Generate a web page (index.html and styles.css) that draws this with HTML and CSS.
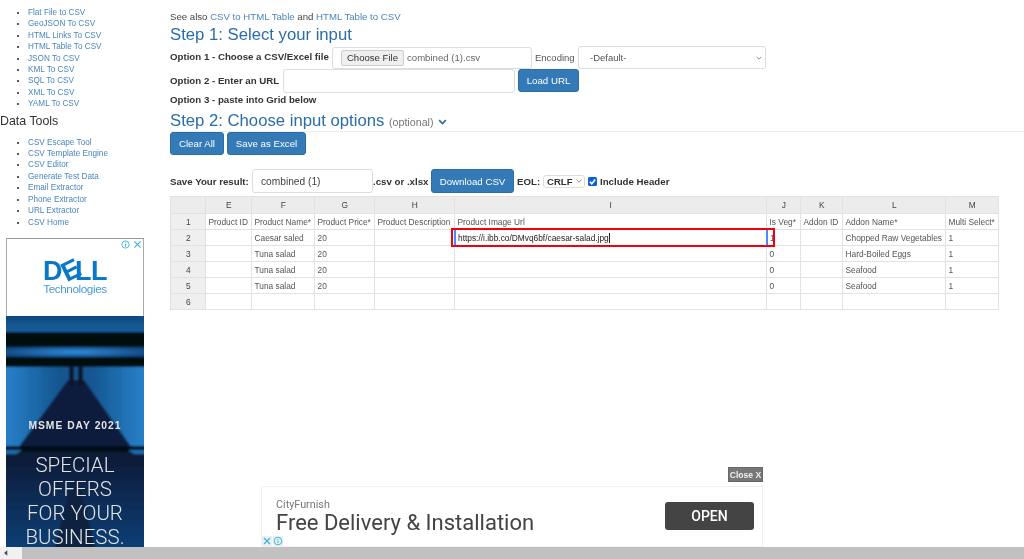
FILE: index.html
```html
<!DOCTYPE html>
<html lang="en">
<head>
<meta charset="utf-8">
<title>CSV Tools</title>
<link rel="stylesheet" href="styles.css">
</head>
<body>
<div class="page">
  <aside class="sidebar">
    <ul class="nav-list first">
      <li><a href="#">Flat File to CSV</a></li>
      <li><a href="#">GeoJSON To CSV</a></li>
      <li><a href="#">HTML Links To CSV</a></li>
      <li><a href="#">HTML Table To CSV</a></li>
      <li><a href="#">JSON To CSV</a></li>
      <li><a href="#">KML To CSV</a></li>
      <li><a href="#">SQL To CSV</a></li>
      <li><a href="#">XML To CSV</a></li>
      <li><a href="#">YAML To CSV</a></li>
    </ul>
    <h4 class="side-title">Data Tools</h4>
    <ul class="nav-list">
      <li><a href="#">CSV Escape Tool</a></li>
      <li><a href="#">CSV Template Engine</a></li>
      <li><a href="#">CSV Editor</a></li>
      <li><a href="#">Generate Test Data</a></li>
      <li><a href="#">Email Extractor</a></li>
      <li><a href="#">Phone Extractor</a></li>
      <li><a href="#">URL Extractor</a></li>
      <li><a href="#">CSV Home</a></li>
    </ul>
    <div class="side-ad">
      <div class="ad-top">
        <div class="ad-badges">
          <svg class="ad-icon" viewBox="0 0 10 10"><circle cx="5" cy="5" r="4" fill="none" stroke="#3fb6d8" stroke-width="1"/><path d="M5 2.600v.9M5 4.400v3" stroke="#3fb6d8" stroke-width="1.200"/></svg>
          <svg class="ad-icon" viewBox="0 0 10 10"><path d="M1.500 1.500l7 7M8.500 1.500l-7 7" stroke="#3fb6d8" stroke-width="1.300"/></svg>
        </div>
        <svg class="dell" viewBox="0 0 64 21">
          <text class="dell-letter" x="0" y="20">D</text>
          <text class="dell-letter" x="19" y="20" transform="rotate(-26 26 11)">E</text>
          <text class="dell-letter" x="32" y="20">L</text>
          <text class="dell-letter" x="48" y="20">L</text>
        </svg>
        <div class="dell-sub">Technologies</div>
      </div>
      <div class="ad-art">
        <svg class="ad-bg" viewBox="0 0 138 231" preserveAspectRatio="none">
          <defs>
            <filter id="soft" x="-5%" y="-5%" width="110%" height="110%"><feGaussianBlur stdDeviation="1"/></filter>
            <radialGradient id="band" cx="0.5" cy="0.5" r="0.6">
              <stop offset="0" stop-color="#2f8fe0"/>
              <stop offset="1" stop-color="#0f3f72"/>
            </radialGradient>
            <linearGradient id="wall" x1="0" y1="0" x2="1" y2="0">
              <stop offset="0" stop-color="#2a83cc"/>
              <stop offset="0.4" stop-color="#12558f"/>
              <stop offset="0.6" stop-color="#12558f"/>
              <stop offset="1" stop-color="#2a83cc"/>
            </linearGradient>
            <linearGradient id="top" x1="0" y1="0" x2="0" y2="1">
              <stop offset="0" stop-color="#0d4478"/>
              <stop offset="1" stop-color="#175f9e"/>
            </linearGradient>
            <linearGradient id="floor" x1="0" y1="0" x2="0" y2="1">
              <stop offset="0" stop-color="#071a34"/>
              <stop offset="1" stop-color="#123f78"/>
            </linearGradient>
          </defs>
          <rect width="138" height="231" fill="#0a2444"/>
          <g filter="url(#soft)">
            <rect x="-4" y="-4" width="146" height="21" fill="url(#top)"/>
            <rect x="-4" y="16" width="146" height="15" fill="#03080f"/>
            <rect x="-4" y="31" width="146" height="10" fill="url(#band)"/>
            <rect x="-4" y="41" width="146" height="10" fill="#03070d"/>
            <rect x="-4" y="51" width="146" height="83" fill="url(#wall)"/>
            <path d="M62 64 12 132H126L78 64Z" fill="#0a1f3c"/>
            <path d="M63 50h5v20h-5zM72 50h5v20h-5z" fill="#071729"/>
            <rect x="-4" y="130" width="146" height="6" fill="#040b16"/>
            <rect x="-4" y="136" width="146" height="99" fill="url(#floor)"/>
            <path d="M-4 134h20l-6 4H-4zM142 134h-20l6 4h14z" fill="#1e6cae"/>
            <path d="M48 235 69 150 90 235Z" fill="#0a2040"/>
          </g>
        </svg>
        <div class="art-text">
          <div class="msme">MSME DAY 2021</div>
          <div class="special">SPECIAL<br>OFFERS<br>FOR YOUR<br>BUSINESS.</div>
        </div>
      </div>
    </div>
  </aside>

  <main class="main">
    <p class="see-also">See also <a href="#">CSV to HTML Table</a> and <a href="#">HTML Table to CSV</a></p>
    <h3 class="step">Step 1: Select your input</h3>
    <div class="row row-opt1">
      <label class="lbl">Option 1 - Choose a CSV/Excel file</label>
      <div class="file-box"><span class="file-btn">Choose File</span><span class="file-name">combined (1).csv</span></div>
      <span class="plain enc-label">Encoding</span>
      <div class="select enc-select"><span>-Default-</span><svg class="chev" viewBox="0 0 10 6"><path d="M1 1l4 4 4-4" fill="none" stroke="#666" stroke-width="1.200"/></svg></div>
    </div>
    <div class="row row-opt2">
      <label class="lbl">Option 2 - Enter an URL</label>
      <div class="text-box url-box"></div>
      <a class="btn load-btn" href="#">Load URL</a>
    </div>
    <div class="lbl opt3">Option 3 - paste into Grid below</div>
    <h3 class="step step2">Step 2: Choose input options <small class="optional">(optional)</small> <svg class="step-chev" viewBox="0 0 12 8"><path d="M1.500 1.500 6 6l4.500-4.500" fill="none" stroke="#2a6ea8" stroke-width="2.200"/></svg></h3>
    <div class="row row-actions">
      <a class="btn clear-btn" href="#">Clear All</a>
      <a class="btn excel-btn" href="#">Save as Excel</a>
    </div>
    <div class="row row-save">
      <label class="lbl">Save Your result:</label>
      <div class="text-box name-box">combined (1)</div>
      <span class="lbl">.csv or .xlsx</span>
      <a class="btn dl-btn" href="#">Download CSV</a>
      <label class="lbl">EOL:</label>
      <div class="select eol-select"><span>CRLF</span><svg class="chev" viewBox="0 0 10 6"><path d="M1 1l4 4 4-4" fill="none" stroke="#666" stroke-width="1.200"/></svg></div>
      <span class="check"><svg viewBox="0 0 10 10"><path d="M2 5.200 4.200 7.500 8 2.800" fill="none" stroke="#fff" stroke-width="1.800"/></svg></span>
      <label class="lbl">Include Header</label>
    </div>
    <table class="grid">
      <colgroup>
        <col class="c-rh"><col class="c-e"><col class="c-f"><col class="c-g"><col class="c-h"><col class="c-i"><col class="c-j"><col class="c-k"><col class="c-l"><col class="c-m">
      </colgroup>
      <thead>
        <tr><th></th><th>E</th><th>F</th><th>G</th><th>H</th><th>I</th><th>J</th><th>K</th><th>L</th><th>M</th></tr>
      </thead>
      <tbody>
        <tr><th class="num">1</th><td>Product ID</td><td>Product Name*</td><td>Product Price*</td><td>Product Description</td><td>Product Image Url</td><td>Is Veg*</td><td>Addon ID</td><td>Addon Name*</td><td>Multi Select*</td></tr>
        <tr><th class="num">2</th><td></td><td>Caesar saled</td><td>20</td><td></td><td class="active"><span class="annot"></span><span class="url">https://i.ibb.co/DMvq6bf/caesar-salad.jpg</span></td><td>1</td><td></td><td>Chopped Raw Vegetables</td><td>1</td></tr>
        <tr><th class="num">3</th><td></td><td>Tuna salad</td><td>20</td><td></td><td></td><td>0</td><td></td><td>Hard-Boiled Eggs</td><td>1</td></tr>
        <tr><th class="num">4</th><td></td><td>Tuna salad</td><td>20</td><td></td><td></td><td>0</td><td></td><td>Seafood</td><td>1</td></tr>
        <tr><th class="num">5</th><td></td><td>Tuna salad</td><td>20</td><td></td><td></td><td>0</td><td></td><td>Seafood</td><td>1</td></tr>
        <tr><th class="num">6</th><td></td><td></td><td></td><td></td><td></td><td></td><td></td><td></td><td></td></tr>
      </tbody>
    </table>
  </main>
</div>

<div class="close-x">Close X</div>
<div class="bottom-ad">
  <div class="bottom-copy">
    <div class="brand">CityFurnish</div>
    <div class="headline">Free Delivery &amp; Installation</div>
  </div>
  <div class="open">OPEN</div>
  <div class="bottom-badges">
    <svg class="mini" viewBox="0 0 10 10"><path d="M2 2l6 6M8 2l-6 6" stroke="#3fb6d8" stroke-width="1.300"/></svg>
    <svg class="mini" viewBox="0 0 10 10"><circle cx="5" cy="5" r="3.800" fill="none" stroke="#3fb6d8"/><path d="M5 3v.8M5 4.500v2.500" stroke="#3fb6d8" stroke-width="1.100"/></svg>
  </div>
</div>
<div class="scrollbar">
  <div class="scroll-left"><svg viewBox="0 0 6 8"><path d="M5 0v8L0 4z" fill="#505050"/></svg></div>
  <div class="scroll-thumb"></div>
</div>
</body>
</html>
```
FILE: styles.css
```css
* { box-sizing: border-box; }
html, body { margin: 0; height: 559px; overflow: hidden; background: #fff; }
body { font-family: "Liberation Sans", Arial, sans-serif; font-size: 9.500px; color: #333; filter: blur(0.3px); }
a { color: #337ab7; text-decoration: none; }

.page { display: flex; height: 559px; overflow: hidden; }

/* Sidebar */
.sidebar { width: 170px; flex: none; display: flex; flex-direction: column; }
.nav-list { margin: 0; padding: 0 0 0 28px; font-size: 8.200px; line-height: 11.400px; list-style: disc; color: #222; }
.nav-list.first { padding-top: 7px; }
.nav-list a { color: #4a86bd; }
.side-title { margin: 4px 0 8px; font-size: 12.400px; line-height: 15px; font-weight: 400; color: #333; }
.side-ad { margin: 10px 0 0 6px; width: 138px; height: 321px; flex: none; display: flex; flex-direction: column; border-top: 1px solid #999; }
.ad-top { height: 77px; flex: none; position: relative; display: flex; flex-direction: column; align-items: center; border-left: 1px solid #aaa; border-right: 1px solid #aaa; background: #fff; padding-top: 21px; }
.ad-badges { position: absolute; top: 1px; right: 1px; display: flex; gap: 3px; }
.ad-icon { width: 9px; height: 9px; display: block; }
.dell { width: 64px; height: 21px; flex: none; display: block; overflow: visible; }
.dell-letter { font-family: "Liberation Sans", Arial, sans-serif; font-size: 27px; font-weight: 700; fill: #0a78c8; }
.dell-sub { font-size: 11.700px; line-height: 12px; color: #4a9ad8; letter-spacing: -0.400px; margin-top: 2px; }
.ad-art { position: relative; flex: 1; overflow: hidden; background: #0a2444; }
.ad-bg { width: 100%; height: 231px; display: block; }
.art-text { position: absolute; top: 0; left: 0; right: 0; bottom: 0; display: flex; flex-direction: column; align-items: center; color: #e4e4e4; }
.msme { margin-top: 104px; font-size: 10.300px; line-height: 12px; font-weight: 700; letter-spacing: 1px; }
.special { margin-top: 21px; font-family: Roboto, sans-serif; font-size: 20.500px; line-height: 24px; text-align: center; font-weight: 300; }

/* Main column */
.main { width: 854px; flex: none; padding-top: 11px; }
.see-also { margin: 0; font-size: 9.650px; line-height: 12px; color: #444; }
.see-also a { color: #4a86bd; }
.step { margin: 2px 0 0; font-size: 16.700px; line-height: 20px; font-weight: 400; color: #2a6ea8; height: 20px; }
.step2 { margin-top: 4px; border-bottom: 1px solid #eee; height: 21px; }
.optional { font-size: 10.700px; color: #777; font-weight: 400; }
.step-chev { width: 9px; height: 6px; vertical-align: 1px; }
.row { display: flex; align-items: center; }
.lbl { font-size: 9.700px; font-weight: 700; color: #333; white-space: nowrap; }
.plain { font-size: 9.500px; color: #555; }
.row-opt1 { height: 23px; margin-top: 1px; }
.row-opt1 .lbl { width: 162px; flex: none; position: relative; top: -1px; }
.file-box { width: 200px; height: 22px; flex: none; border: 1px solid #ddd; border-radius: 3px; display: flex; align-items: center; padding-left: 8px; font-size: 9.600px; color: #666; }
.file-btn { height: 16px; width: 63px; flex: none; background: #efefef; border: 1px solid #ccc; border-radius: 2px; color: #333; display: flex; align-items: center; justify-content: center; margin-right: 3px; }
.enc-label { margin: 0 4px 0 3px; width: 39px; flex: none; }
.select { display: flex; align-items: center; justify-content: space-between; border: 1px solid #ddd; border-radius: 3px; background: #fff; }
.enc-select { width: 188px; height: 23px; padding: 0 3px 0 11px; font-size: 9.500px; color: #555; }
.chev { width: 6px; height: 4px; flex: none; }
.row-opt2 { height: 23px; }
.row-opt2 .lbl { width: 113px; flex: none; }
.text-box { border: 1px solid #ddd; border-radius: 3px; background: #fff; height: 24px; display: flex; align-items: center; font-size: 10.200px; color: #444; }
.url-box { width: 232px; flex: none; margin-right: 3px; }
.btn { background: #337ab7; border: 1px solid #2e6da4; border-radius: 3px; color: #fff; font-size: 9.700px; display: flex; align-items: center; justify-content: center; flex: none; height: 23px; }
.load-btn { width: 61px; }
.opt3 { line-height: 14px; height: 14px; margin-top: 1px; }
.row-actions { gap: 3px; height: 23px; margin-top: 0; }
.clear-btn { width: 54px; }
.excel-btn { width: 79px; }
.row-save { height: 24px; margin-top: 14px; }
.row-save .lbl:first-child { width: 82px; flex: none; }
.name-box { width: 121px; flex: none; padding-left: 8px; height: 24px; }
.row-save .lbl:nth-child(3) { width: 58px; flex: none; }
.dl-btn { width: 83px; height: 24px; margin-right: 3px; }
.row-save .lbl:nth-child(5) { width: 26px; flex: none; }
.eol-select { width: 42px; height: 13px; padding: 0 2px 0 3px; font-size: 9.600px; font-weight: 700; color: #333; margin-right: 3px; flex: none; }
.check { width: 9px; height: 9px; background: #0b62d6; border-radius: 1.500px; flex: none; margin-right: 3px; display: flex; }
.check svg { width: 9px; height: 9px; display: block; }

/* Grid */
.grid { margin-top: 3px; width: 828px; table-layout: fixed; border-collapse: collapse; font-size: 8.350px; color: #555; }
.c-rh { width: 35px; } .c-e { width: 46px; } .c-f { width: 63px; } .c-g { width: 60px; } .c-h { width: 80px; }
.c-i { width: 312px; } .c-j { width: 34px; } .c-k { width: 42px; } .c-l { width: 103px; } .c-m { width: 53px; }
.grid th, .grid td { border: 1px solid #e2e2e2; padding: 0 2px 0 2.500px; height: 16px; white-space: nowrap; overflow: hidden; font-weight: 400; line-height: 14px; }
.grid thead th { background: #ececec; height: 17px; text-align: center; color: #444; }
.grid .num { background: #efefef; text-align: center; color: #444; }
.grid .active { position: relative; overflow: visible; color: #222; border-left: 2px solid #4b89ff; border-right: 2px solid #4b89ff; }
.annot { position: absolute; top: -2px; left: -5px; width: 324px; height: 19px; border: 2.500px solid #f00010; pointer-events: none; }
.url { position: relative; border-right: 1px solid #222; }

/* Overlays */
.close-x { position: absolute; left: 728px; top: 467px; width: 35px; height: 15px; background: #777; border: 1px solid #666; color: #f0f0f0; font-size: 8.600px; font-weight: 700; display: flex; align-items: center; justify-content: center; }
.bottom-ad { position: absolute; left: 261px; top: 486px; width: 502px; height: 61px; background: #fff; border: 1px solid #f1f1f1; display: flex; align-items: flex-start; justify-content: space-between; padding: 11px 8px 0 14px; }
.brand { font-family: Roboto, sans-serif; font-size: 10.800px; line-height: 13px; color: #777; }
.headline { font-family: Roboto, sans-serif; font-size: 22px; line-height: 26px; color: #444; margin-top: -1px; }
.open { width: 89px; height: 28px; margin-top: 4px; background: #444; border-radius: 3px; color: #fff; font-family: Roboto, sans-serif; font-size: 14px; font-weight: 500; display: flex; align-items: center; justify-content: center; }
.bottom-badges { position: absolute; left: 0; bottom: 0; display: flex; gap: 1px; }
.mini { width: 10px; height: 10px; display: block; background: #e9f1f4; }
.scrollbar { position: absolute; left: 0; top: 547px; width: 1024px; height: 12px; display: flex; background: #f1f1f1; }
.scroll-left { width: 22px; flex: none; display: flex; align-items: center; padding-left: 4px; }
.scroll-left svg { width: 4px; height: 6px; }
.scroll-thumb { flex: 1; background: #c1c1c1; }
```
